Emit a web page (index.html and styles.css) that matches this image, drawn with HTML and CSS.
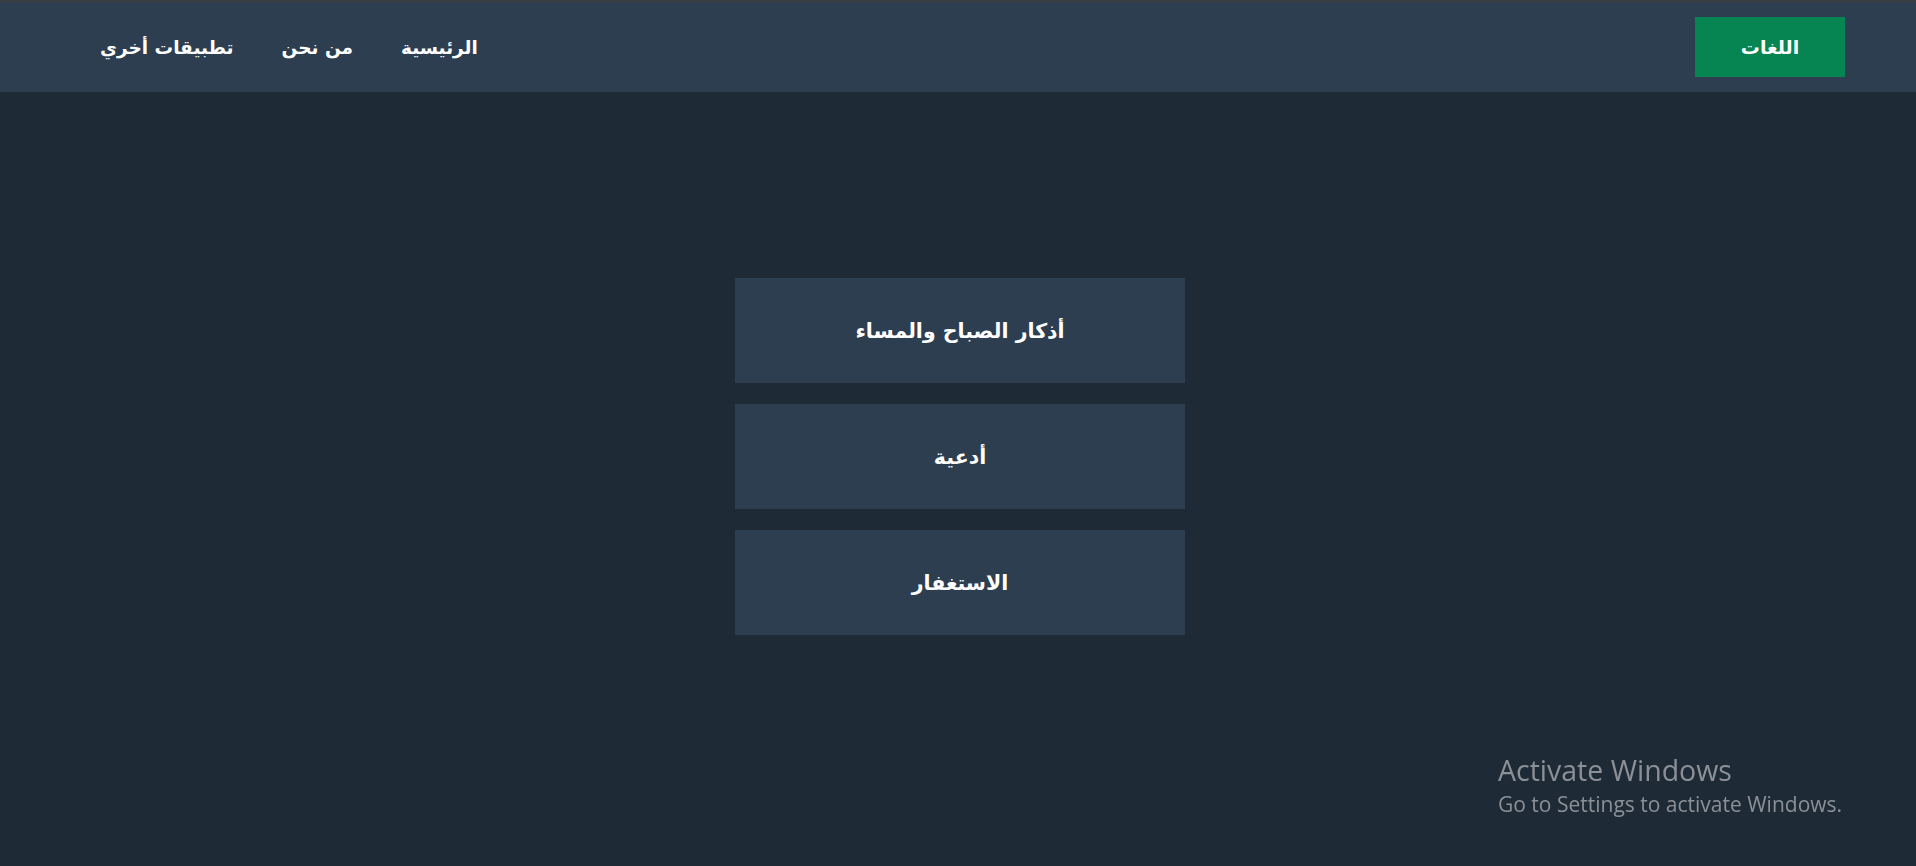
FILE: index.html
```html
<!DOCTYPE html>
<html lang="ar" dir="rtl">
<head>
<meta charset="utf-8">
<title>أذكار</title>
<link rel="stylesheet" href="styles.css">
</head>
<body>
<header class="navbar">
  <a class="lang-btn" href="#">اللغات</a>
  <nav class="nav-links">
    <a href="#">الرئيسية</a>
    <a href="#">من نحن</a>
    <a href="#">تطبيقات أخري</a>
  </nav>
</header>
<main class="menu">
  <a class="card" href="#">أذكار الصباح والمساء</a>
  <a class="card" href="#">أدعية</a>
  <a class="card" href="#">الاستغفار</a>
</main>
<div class="activate" dir="ltr">
  <div class="activate-title">Activate Windows</div>
  <div class="activate-sub">Go to Settings to activate Windows.</div>
</div>
</body>
</html>
```
FILE: styles.css
```css
html, body {
  margin: 0;
  padding: 0;
}
body {
  background: #1f2a37;
  font-family: "DejaVu Sans", "Noto Sans", sans-serif;
  color: #ffffff;
  min-height: 866px;
}
a {
  color: #ffffff;
  text-decoration: none;
}
.navbar {
  border-top: 2px solid #3a3d42;
  height: 90px;
  background: #2d3e50;
  display: flex;
  align-items: center;
  justify-content: space-between;
  padding: 0 71px 0 76px;
}
.lang-btn {
  width: 150px;
  height: 60px;
  background: #068552;
  display: flex;
  align-items: center;
  justify-content: center;
  font-weight: bold;
  font-size: 19px;
}
.nav-links {
  display: flex;
  align-items: center;
}
.nav-links a {
  padding: 0 24px;
  font-weight: bold;
  font-size: 18.5px;
}
.menu {
  display: flex;
  flex-direction: column;
  align-items: center;
  gap: 21px;
  padding-top: 186px;
  padding-left: 4px;
}
.card {
  width: 450px;
  height: 105px;
  background: #2d3e50;
  display: flex;
  align-items: center;
  justify-content: center;
  font-weight: bold;
  font-size: 20.5px;
}
.activate {
  position: fixed;
  left: 1498px;
  top: 753px;
  color: #8b9097;
  font-family: "Open Sans", "Noto Sans", sans-serif;
}
.activate-title {
  font-size: 28.5px;
  line-height: 34px;
}
.activate-sub {
  font-size: 21px;
  line-height: 30px;
  margin-top: 2px;
}
```
